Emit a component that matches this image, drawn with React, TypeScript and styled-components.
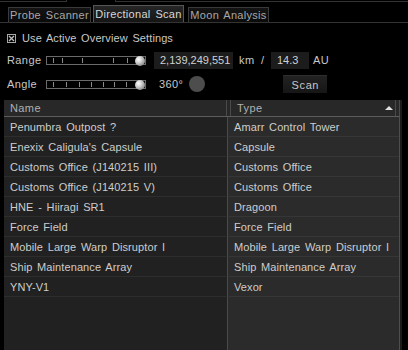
import React from "react";
import styled, { createGlobalStyle } from "styled-components";

const Global = createGlobalStyle`
  html, body { margin: 0; padding: 0; background: #000; }
  body {
    font-family: "Liberation Sans", Arial, sans-serif;
    font-size: 11px;
    letter-spacing: 0.1px;
    word-spacing: 1.5px;
    color: #c8c8c8;
  }
`;

const Page = styled.div`
  width: 408px;
  height: 350px;
  overflow: hidden;
  display: flex;
  flex-direction: column;
  background: #000;
`;

const TopStrip = styled.div`
  height: 2px;
  display: flex;
`;

const TopBox = styled.div<{ $w?: number; $left?: boolean }>`
  height: 1px;
  border-bottom: 1px solid #333;
  ${(p) => (p.$left ? "border-right: 1px solid #333;" : "border-left: 1px solid #333;")}
  width: ${(p) => (p.$w ? `${p.$w}px` : "auto")};
  flex: ${(p) => (p.$w ? "none" : "1")};
`;

const Gap = styled.div<{ $w: number }>`
  width: ${(p) => p.$w}px;
  flex: none;
`;

const TabBar = styled.div`
  height: 20px;
  display: flex;
  align-items: flex-end;
  padding-left: 8px;
  gap: 2px;
  border-bottom: 1px solid #333;
`;

const Tab = styled.div<{ $active?: boolean; $w: number }>`
  width: ${(p) => p.$w}px;
  height: ${(p) => (p.$active ? 17 : 15)}px;
  box-sizing: border-box;
  border: 1px solid ${(p) => (p.$active ? "#555" : "#3a3a3a")};
  border-bottom: none;
  background: ${(p) =>
    p.$active ? "linear-gradient(#262626, #151515)" : "linear-gradient(#141414, #0b0b0b)"};
  color: ${(p) => (p.$active ? "#d8d8d8" : "#a8a8a8")};
  display: flex;
  align-items: center;
  justify-content: center;
  white-space: nowrap;
  letter-spacing: 0.3px;
  margin-right: ${(p) => (p.$active ? 2 : 0)}px;
`;

const Controls = styled.div`
  display: flex;
  flex-direction: column;
  padding-left: 7px;
  margin-top: 8px;
`;

const CheckRow = styled.div`
  height: 14px;
  display: flex;
  align-items: center;
  gap: 6px;
  color: #c8c8c8;
`;

const ControlRow = styled.div<{ $mt: number }>`
  height: 20px;
  margin-top: ${(p) => p.$mt}px;
  display: flex;
  align-items: center;
`;

const Label = styled.span`
  width: 39px;
  flex: none;
  letter-spacing: 0.4px;
`;

const Rail = styled.div`
  position: relative;
  width: 100px;
  height: 9px;
  box-sizing: border-box;
  border: 1px solid #6a6a6a;
  flex: none;
`;

const Tick = styled.div`
  position: absolute;
  top: 1px;
  width: 1px;
  height: 5px;
  background: #8a8a8a;
`;

const Knob = styled.div`
  position: absolute;
  right: 0px;
  top: -1px;
  width: 10px;
  height: 10px;
  border-radius: 50%;
  background: radial-gradient(circle at 35% 35%, #ffffff 0%, #d0d0d0 35%, #8a8a8a 75%, #5a5a5a 100%);
`;

const Field = styled.div<{ $w: number }>`
  width: ${(p) => p.$w}px;
  height: 17px;
  box-sizing: border-box;
  background: #1c1c1c;
  padding-left: 6px;
  display: flex;
  align-items: center;
  color: #d0d0d0;
  letter-spacing: 0;
  white-space: nowrap;
  overflow: hidden;
  flex: none;
`;

const Unit = styled.span<{ $w?: number; $ml: number }>`
  margin-left: ${(p) => p.$ml}px;
  width: ${(p) => (p.$w ? `${p.$w}px` : "auto")};
  flex: none;
  letter-spacing: 0.4px;
  word-spacing: 3px;
  white-space: nowrap;
`;

const Dial = styled.div`
  width: 16px;
  height: 16px;
  border-radius: 50%;
  background: #4d4d4d;
  margin-left: 6px;
  flex: none;
`;

const ScanButton = styled.div`
  margin-left: 78px;
  width: 44px;
  height: 18px;
  box-sizing: border-box;
  background: linear-gradient(#222, #161616);
  border-top: 1px solid #2e2e2e;
  display: flex;
  align-items: center;
  justify-content: center;
  letter-spacing: 0.6px;
  color: #c8c8c8;
  flex: none;
`;

const Table = styled.div`
  margin-top: 6px;
  margin-left: 4px;
  width: 398px;
  flex: 1;
  min-height: 0;
  display: flex;
  flex-direction: column;
  box-sizing: border-box;
  border-right: 2px solid #1b1b1b;
  overflow: hidden;
`;

const HeadRow = styled.div`
  height: 16px;
  flex: none;
  display: grid;
  grid-template-columns: 223px 1fr;
  background: #282828;
  border-bottom: 1px solid #5c5c5c;
  border-right: 1px solid #4a4a4a;
  color: #b0b0b0;
`;

const HeadCell = styled.div<{ $right?: boolean }>`
  display: flex;
  align-items: center;
  padding-left: 6px;
  letter-spacing: 0.4px;
  ${(p) =>
    p.$right
      ? "border-left: 1px solid #4a4a4a; margin-left: 3px; margin-right: 3px; border-right: 1px solid #4a4a4a; padding-right: 2px;"
      : "border-right: 1px solid #4a4a4a;"}
`;

const SortArrow = styled.span`
  margin-left: auto;
  width: 0;
  height: 0;
  border-left: 4px solid transparent;
  border-right: 4px solid transparent;
  border-bottom: 4px solid #e0e0e0;
`;

const Row = styled.div<{ $fill?: boolean }>`
  display: grid;
  grid-template-columns: 223px 1fr;
  height: ${(p) => (p.$fill ? "auto" : "20px")};
  flex: ${(p) => (p.$fill ? "1" : "none")};
  border-right: 1px solid #4e4e4e;
`;

const Cell = styled.div<{ $type?: boolean; $fill?: boolean }>`
  background: ${(p) => (p.$type ? "#2b2b2b" : "#212121")};
  border-bottom: ${(p) => (p.$fill ? "none" : `1px solid ${p.$type ? "#363636" : "#2d2d2d"}`)};
  ${(p) => (p.$type ? "border-left: 1px solid #4a4a4a;" : "")}
  display: flex;
  align-items: center;
  padding-left: 6px;
  white-space: nowrap;
  overflow: hidden;
  color: #cdcdcd;
`;

const rows: [string, string][] = [
  ["Penumbra Outpost ?", "Amarr Control Tower"],
  ["Enexix Caligula's Capsule", "Capsule"],
  ["Customs Office (J140215 III)", "Customs Office"],
  ["Customs Office (J140215 V)", "Customs Office"],
  ["HNE - Hiiragi SR1", "Dragoon"],
  ["Force Field", "Force Field"],
  ["Mobile Large Warp Disruptor I", "Mobile Large Warp Disruptor I"],
  ["Ship Maintenance Array", "Ship Maintenance Array"],
  ["YNY-V1", "Vexor"],
];

const rangeTicks = [6, 15, 35, 66, 80];
const angleTicks = [6, 19, 32, 44, 56, 67, 79];

const Slider = ({ ticks }: { ticks: number[] }) => (
  <Rail>
    {ticks.map((t) => (
      <Tick key={t} style={{ left: t }} />
    ))}
    <Knob />
  </Rail>
);

export default function App() {
  return (
    <>
      <Global />
      <Page>
        <TopStrip>
          <TopBox $w={66} $left />
          <Gap $w={48} />
          <TopBox />
        </TopStrip>
        <TabBar>
          <Tab $w={83}>Probe Scanner</Tab>
          <Tab $w={91} $active>Directional Scan</Tab>
          <Tab $w={81}>Moon Analysis</Tab>
        </TabBar>
        <Controls>
          <CheckRow>
            <svg width="9" height="9" viewBox="0 0 9 9">
              <rect x="0.5" y="0.5" width="8" height="8" fill="none" stroke="#a8a8a8" />
              <path d="M2 2L7 7M7 2L2 7" stroke="#c0c0c0" strokeWidth="1.3" />
            </svg>
            <span>Use Active Overview Settings</span>
          </CheckRow>
          <ControlRow $mt={5}>
            <Label>Range</Label>
            <Slider ticks={rangeTicks} />
            <Field $w={79} style={{ marginLeft: 8 }}>2,139,249,551</Field>
            <Unit $ml={6} $w={32}>km /</Unit>
            <Field $w={38}>14.3</Field>
            <Unit $ml={4}>AU</Unit>
          </ControlRow>
          <ControlRow $mt={4}>
            <Label>Angle</Label>
            <Slider ticks={angleTicks} />
            <Unit $ml={13}>360°</Unit>
            <Dial />
            <ScanButton>Scan</ScanButton>
          </ControlRow>
        </Controls>
        <Table>
          <HeadRow>
            <HeadCell>Name</HeadCell>
            <HeadCell $right>
              Type
              <SortArrow />
            </HeadCell>
          </HeadRow>
          {rows.map(([n, t], i) => (
            <Row key={i}>
              <Cell>{n}</Cell>
              <Cell $type>{t}</Cell>
            </Row>
          ))}
          <Row $fill>
            <Cell $fill />
            <Cell $type $fill />
          </Row>
        </Table>
      </Page>
    </>
  );
}
